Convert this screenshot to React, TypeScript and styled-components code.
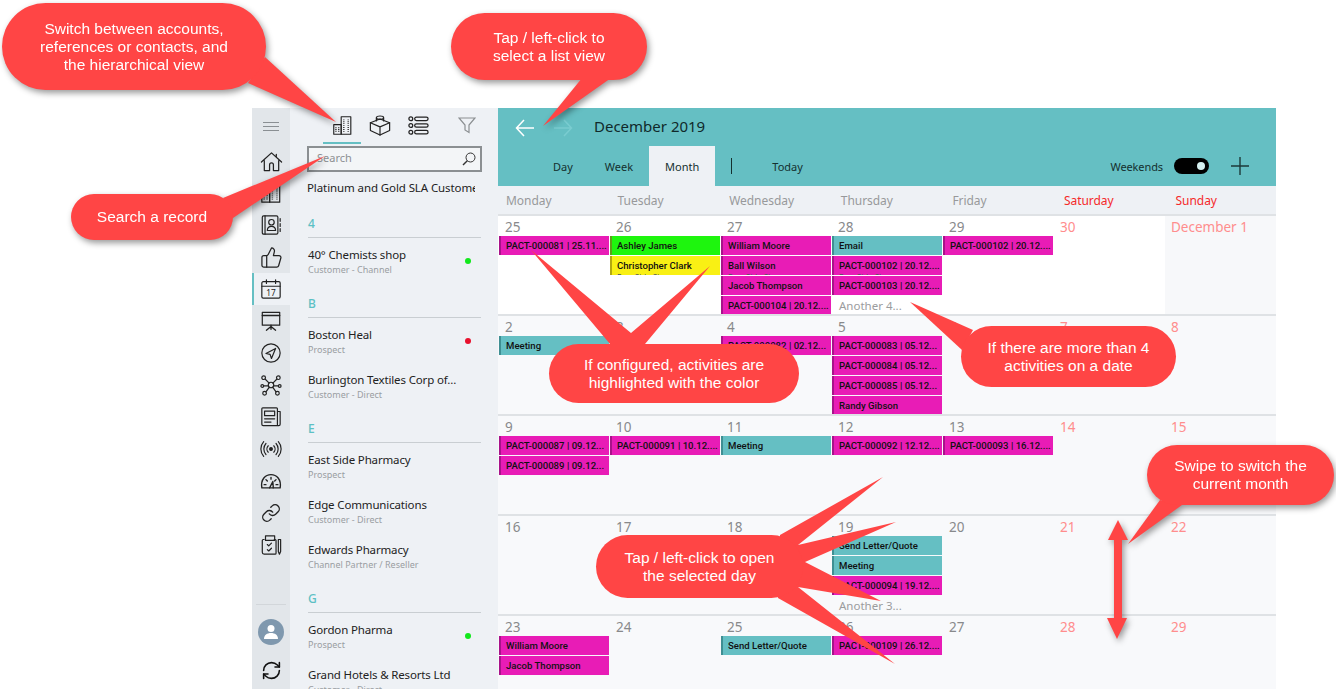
import React from "react";
import styled, { createGlobalStyle } from "styled-components";
import { Link, RefreshCw, ThumbsUp } from "lucide-react";

type Activity = { text: string; kind?: "pink" | "teal" | "green" | "yellow"; sub?: string; more?: boolean };
type Day = { label: string; weekend?: boolean; tint?: boolean; items?: Activity[] };

const pact = (text: string): Activity => ({ text, kind: "pink" });
const teal = (text: string): Activity => ({ text, kind: "teal" });

const weekdays = ["Monday", "Tuesday", "Wednesday", "Thursday", "Friday", "Saturday", "Sunday"];

const weeks: Day[][] = [
  [
    { label: "25", items: [pact("PACT-000081 | 25.11....")] },
    {
      label: "26",
      items: [
        { text: "Ashley James", kind: "green" },
        { text: "Christopher Clark", kind: "yellow", sub: "East Side Sh" },
      ],
    },
    {
      label: "27",
      items: [
        pact("William Moore"),
        { text: "Ball Wilson", kind: "pink", sub: "East Side Sh" },
        pact("Jacob Thompson"),
        pact("PACT-000104 | 20.12...."),
      ],
    },
    {
      label: "28",
      items: [
        teal("Email"),
        { text: "PACT-000102 | 20.12....", kind: "pink", sub: "East Side Sh" },
        pact("PACT-000103 | 20.12...."),
        { text: "Another 4...", more: true },
      ],
    },
    { label: "29", items: [pact("PACT-000102 | 20.12....")] },
    { label: "30", weekend: true },
    { label: "December 1", weekend: true, tint: true },
  ],
  [
    { label: "2", items: [teal("Meeting")] },
    { label: "3" },
    { label: "4", items: [pact("PACT-000082 | 02.12...")] },
    {
      label: "5",
      items: [
        pact("PACT-000083 | 05.12..."),
        pact("PACT-000084 | 05.12..."),
        pact("PACT-000085 | 05.12..."),
        pact("Randy Gibson"),
      ],
    },
    { label: "6" },
    { label: "7", weekend: true },
    { label: "8", weekend: true },
  ],
  [
    { label: "9", items: [pact("PACT-000087 | 09.12..."), pact("PACT-000089 | 09.12...")] },
    { label: "10", items: [pact("PACT-000091 | 10.12....")] },
    { label: "11", items: [teal("Meeting")] },
    { label: "12", items: [pact("PACT-000092 | 12.12....")] },
    { label: "13", items: [pact("PACT-000093 | 16.12....")] },
    { label: "14", weekend: true },
    { label: "15", weekend: true },
  ],
  [
    { label: "16" },
    { label: "17" },
    { label: "18" },
    {
      label: "19",
      items: [
        teal("Send Letter/Quote"),
        teal("Meeting"),
        pact("PACT-000094 | 19.12...."),
        { text: "Another 3...", more: true },
      ],
    },
    { label: "20" },
    { label: "21", weekend: true },
    { label: "22", weekend: true },
  ],
  [
    { label: "23", items: [pact("William Moore"), pact("Jacob Thompson")] },
    { label: "24" },
    { label: "25", items: [teal("Send Letter/Quote")] },
    { label: "26", items: [pact("PACT-000109 | 26.12....")] },
    { label: "27" },
    { label: "28", weekend: true },
    { label: "29", weekend: true },
  ],
];

const sections = [
  { head: "4", rows: [{ name: "40° Chemists shop", sub: "Customer - Channel", dot: "#12e81c" }] },
  {
    head: "B",
    rows: [
      { name: "Boston Heal", sub: "Prospect", dot: "#e8112d" },
      { name: "Burlington Textiles Corp of...", sub: "Customer - Direct" },
    ],
  },
  {
    head: "E",
    rows: [
      { name: "East Side Pharmacy", sub: "Prospect" },
      { name: "Edge Communications", sub: "Customer - Direct" },
      { name: "Edwards Pharmacy", sub: "Channel Partner / Reseller" },
    ],
  },
  {
    head: "G",
    rows: [
      { name: "Gordon Pharma", sub: "Prospect", dot: "#12e81c" },
      { name: "Grand Hotels & Resorts Ltd", sub: "Customer - Direct" },
    ],
  },
];

const Icon = ({ children, size = 22 }: { children: React.ReactNode; size?: number }) => (
  <svg width={size} height={size} viewBox="0 0 24 24" fill="none" stroke="#222" strokeWidth="1.3" strokeLinejoin="round" strokeLinecap="round">
    {children}
  </svg>
);

const BuildingIcon = ({ size = 22 }: { size?: number }) => (
  <Icon size={size}>
    <rect x="10.5" y="2" width="11" height="20" />
    <rect x="2" y="11" width="8.5" height="11" />
    <path d="M13.5 5v15M18.5 5v15" strokeDasharray="1 1.2" strokeLinecap="butt" strokeWidth="1.5" />
    <path d="M4.5 14v6M7.7 14v6" strokeDasharray="1 1" strokeLinecap="butt" strokeWidth="1.5" />
  </Icon>
);

const icons = {
  home: (
    <Icon size={23}>
      <path d="M1.5 12.5 12 3l10.500 9.500M17 4.500V7.500M4.500 11v10.500h5.500v-6a2 2 0 0 1 4 0v6h5.500V11" />
    </Icon>
  ),
  contacts: (
    <Icon>
      <rect x="2.500" y="2" width="17" height="20" rx="1.500" />
      <path d="M5.500 2v20M22 5v3M22 10.500v3M22 16v3" />
      <circle cx="12.500" cy="9" r="3" />
      <path d="M8 18c0-6 9-6 9 0z" />
    </Icon>
  ),
  calendar: (
    <Icon>
      <rect x="2" y="4" width="20" height="18" rx="1.500" />
      <path d="M2 9h20M7 2v4M17 2v4" />
      <text x="12" y="19.500" fontSize="9" textAnchor="middle" fill="#222" stroke="none" fontFamily="Noto Sans, sans-serif">17</text>
    </Icon>
  ),
  board: (
    <Icon>
      <rect x="2.500" y="2.500" width="19" height="14" />
      <path d="M2.500 6h19M12 16.500V21M12 18l-5 4M12 18l5 4" strokeWidth="1.500" />
    </Icon>
  ),
  send: (
    <Icon>
      <circle cx="12" cy="12" r="10" />
      <path d="M17 7 6.500 12.500l4.500 1 1.500 4.500z" />
    </Icon>
  ),
  network: (
    <Icon>
      <circle cx="12" cy="12" r="3" />
      <circle cx="4" cy="4" r="2" />
      <circle cx="20" cy="4" r="2" />
      <circle cx="2.500" cy="13" r="1.500" />
      <circle cx="21.500" cy="13" r="1.500" />
      <circle cx="5" cy="21" r="2" />
      <circle cx="19" cy="21" r="2" />
      <path d="M5.500 5.500 10 10M18.500 5.500 14 10M4 13h5M20 13h-5M6.500 19.500 10 14.500M17.500 19.500 14 14.500" />
    </Icon>
  ),
  news: (
    <Icon>
      <path d="M19 20.500V3a1 1 0 0 0-1-1H3a1 1 0 0 0-1 1v17a1.500 1.500 0 0 0 1.500 1.500H20.500A1.500 1.500 0 0 0 22 20V6h-3" />
      <rect x="5" y="5.500" width="11" height="5" />
      <path d="M5 14h11M5 17.500h7" />
    </Icon>
  ),
  signal: (
    <Icon>
      <circle cx="12" cy="12" r="1.500" fill="#222" />
      <path d="M9 8.500a5 5 0 0 0 0 7M15 8.500a5 5 0 0 1 0 7M6.500 6a9 9 0 0 0 0 12M17.500 6a9 9 0 0 1 0 12M4 4a12 12 0 0 0 0 16M20 4a12 12 0 0 1 0 16" />
    </Icon>
  ),
  gauge: (
    <Icon>
      <path d="M2 19.500C.5 10 6 5 12 5s11.500 5 10 14.500zM12 8v2M6.500 10.500 8 12M17.500 10.500 16 12M4.500 16h2M19.500 16h-2" strokeWidth="1.500" />
      <path d="M10.500 19.500 14 12.500l.5 7" strokeWidth="1.500" />
    </Icon>
  ),
  clip: (
    <Icon>
      <path d="M17 6H18a1 1 0 0 1 1 1v14a1 1 0 0 1-1 1H6a2 2 0 0 1-2-2V7a1 1 0 0 1 1-1h1" transform="translate(-1.500 0)" />
      <rect x="6" y="2" width="10" height="5" />
      <path d="M8 11.500l1.500 1.500 3-3M8 17l1.500 1.500 3-3" />
      <path d="M20 6h2.500v13L21.200 22 20 19z" />
    </Icon>
  ),
};

const callouts = [
  "265,57 336,122 248,83",
  "223,198 325,156 233,218",
  "582,78 543,126 611,78",
  "1160,500 1128,544 1182,505",
];

const flatTails = [
  "610,344 531,250 631,333 710,266 645,344",
  "973,330 910,302 962,350",
  "780,535 883,477 798,545 896,522 805,562 881,601 798,587 895,664 778,598",
];

export default function App() {
  return (
    <>
      <GlobalStyle />
      <Page>
        <Window>
          <Rail>
            <MenuButton>
              <Burger />
            </MenuButton>
            <RailItem>{icons.home}</RailItem>
            <RailItem><BuildingIcon /></RailItem>
            <RailItem>{icons.contacts}</RailItem>
            <RailItem><ThumbsUp size={23} strokeWidth={1.3} color="#222" /></RailItem>
            <RailItem $active>{icons.calendar}</RailItem>
            <RailItem>{icons.board}</RailItem>
            <RailItem>{icons.send}</RailItem>
            <RailItem>{icons.network}</RailItem>
            <RailItem>{icons.news}</RailItem>
            <RailItem>{icons.signal}</RailItem>
            <RailItem>{icons.gauge}</RailItem>
            <RailItem><Link size={20} strokeWidth={1.6} color="#222" /></RailItem>
            <RailItem>{icons.clip}</RailItem>
            <RailFooter>
              <AvatarSlot>
                <Avatar>
                  <svg width="16" height="16" viewBox="0 0 16 16" fill="#fff">
                    <circle cx="8" cy="4.500" r="3.500" />
                    <path d="M1 15c0-4 3-6 7-6s7 2 7 6z" />
                  </svg>
                </Avatar>
              </AvatarSlot>
              <RailItem><RefreshCw size={21} strokeWidth={1.8} color="#111" /></RailItem>
            </RailFooter>
          </Rail>

          <ListPanel>
            <ModeBar>
              <ModeTab $active><BuildingIcon size={21} /></ModeTab>
              <ModeTab>
                <Icon size={22}>
                  <path d="M12 5.500 22.500 9.500V18L12 23 1.500 18V9.500z" />
                  <path d="M1.500 9.500 12 14l10.500-4.500M12 14v9" />
                  <path d="M8 7.500V4a4 1.800 0 0 1 8 0v3.500M8 4a4 1.800 0 0 0 8 0" />
                </Icon>
              </ModeTab>
              <ModeTab>
                <Icon size={23}>
                  <circle cx="4" cy="5" r="2" />
                  <circle cx="4" cy="12" r="2" />
                  <circle cx="4" cy="19" r="2" />
                  <rect x="8" y="3.200" width="14" height="3.600" rx="1.800" />
                  <rect x="8" y="10.200" width="14" height="3.600" rx="1.800" />
                  <rect x="8" y="17.200" width="14" height="3.600" rx="1.800" />
                </Icon>
              </ModeTab>
              <FilterButton>
                <svg width="18" height="18" viewBox="0 0 18 18" fill="none" stroke="#8b8f92" strokeWidth="1.200">
                  <path d="M1 2h16l-6 7v7.500l-4-2.500V9z" />
                </svg>
              </FilterButton>
            </ModeBar>
            <SearchBox>
              <SearchText>Search</SearchText>
              <svg width="14" height="14" viewBox="0 0 14 14" fill="none" stroke="#333" strokeWidth="1">
                <circle cx="8.500" cy="5.500" r="4.500" />
                <path d="M5.300 8.700 1 13" strokeWidth="1.400" />
              </svg>
            </SearchBox>
            <ListTitle>Platinum and Gold SLA Customers</ListTitle>
            {sections.map((section) => (
              <section key={section.head}>
                <SectionHead>{section.head}</SectionHead>
                {section.rows.map((row) => (
                  <AccountRow key={row.name}>
                    <AccountText>
                      <AccountName>{row.name}</AccountName>
                      <AccountSub>{row.sub}</AccountSub>
                    </AccountText>
                    {row.dot && <StatusDot $color={row.dot} />}
                  </AccountRow>
                ))}
              </section>
            ))}
          </ListPanel>

          <Main>
            <Header>
              <TitleBar>
                <svg width="20" height="18" viewBox="0 0 20 18" fill="none" stroke="#fff" strokeWidth="1.500">
                  <path d="M19 9H1.500M9 1 1.500 9 9 17" />
                </svg>
                <ForwardArrow width="20" height="18" viewBox="0 0 20 18" fill="none" stroke="#7accd0" strokeWidth="1.500">
                  <path d="M1 9h17.500M11 1l7.500 8-7.500 8" />
                </ForwardArrow>
                <MonthTitle>December 2019</MonthTitle>
              </TitleBar>
              <ViewBar>
                <ViewTab>Day</ViewTab>
                <ViewTab>Week</ViewTab>
                <ViewTab $active>Month</ViewTab>
                <ViewDivider />
                <TodayLabel>Today</TodayLabel>
                <WeekendsLabel>Weekends</WeekendsLabel>
                <Toggle>
                  <ToggleKnob />
                </Toggle>
                <svg width="18" height="18" viewBox="0 0 18 18" stroke="#1d3a3a" strokeWidth="1.400">
                  <path d="M9 0v18M0 9h18" />
                </svg>
              </ViewBar>
            </Header>

            <WeekdayRow>
              {weekdays.map((day, i) => (
                <Weekday key={day} $weekend={i > 4}>{day}</Weekday>
              ))}
            </WeekdayRow>

            {weeks.map((week, w) => (
              <WeekRow key={w} $white={w === 0}>
                {week.map((day, d) => (
                  <DayCell key={d} $tint={day.tint}>
                    <DayNumber $weekend={day.weekend}>{day.label}</DayNumber>
                    {day.items?.map((item, n) =>
                      item.more ? (
                        <MoreLink key={n}>{item.text}</MoreLink>
                      ) : (
                        <ActivityChip key={n} $kind={item.kind || "pink"}>
                          <ChipTitle>{item.text}</ChipTitle>
                          {item.sub && <ChipSub>{item.sub}</ChipSub>}
                        </ActivityChip>
                      )
                    )}
                  </DayCell>
                ))}
              </WeekRow>
            ))}
          </Main>
        </Window>

        <ShadowLayer>
          <Tails viewBox="0 0 1336 689">
            {callouts.map((points) => (
              <polygon key={points} points={points} fill="#ff4545" />
            ))}
            <polygon points="1118,520 1128,540 1122,540 1122,618 1127,618 1117,639 1107,618 1114,618 1114,540 1108,540" fill="#ff4545" />
          </Tails>
          <SwitchCallout>Switch between accounts,<br />references or contacts, and<br />the hierarchical view</SwitchCallout>
          <SearchCallout>Search a record</SearchCallout>
          <ListCallout>Tap / left-click to<br />select a list view</ListCallout>
          <SwipeCallout>Swipe to switch the<br />current month</SwipeCallout>
        </ShadowLayer>
        <FlatLayer>
          <Tails viewBox="0 0 1336 689">
            {flatTails.map((points) => (
              <polygon key={points} points={points} fill="#ff4545" />
            ))}
          </Tails>
          <ColorCallout>If configured, activities are<br />highlighted with the color</ColorCallout>
          <MoreCallout>If there are more than 4<br />activities on a date</MoreCallout>
          <OpenCallout>Tap / left-click to open<br />the selected day</OpenCallout>
        </FlatLayer>
      </Page>
    </>
  );
}

const GlobalStyle = createGlobalStyle`
  html, body {
    margin: 0;
    background: #fff;
    font-family: "Noto Sans", "Open Sans", sans-serif;
  }
`;

const Page = styled.div`
  position: relative;
  width: 1336px;
  height: 689px;
  padding: 108px 60px 0 252px;
  box-sizing: border-box;
  overflow: hidden;
`;

const Window = styled.div`
  display: flex;
  width: 1024px;
  height: 581px;
  overflow: hidden;
`;

const Rail = styled.nav`
  display: flex;
  flex-direction: column;
  flex: 0 0 38px;
  background: #e2e6ea;
`;

const MenuButton = styled.div`
  display: flex;
  align-items: center;
  justify-content: center;
  height: 37px;
`;

const Burger = styled.div`
  width: 16px;
  height: 7px;
  border-top: 1px solid #8a8f93;
  border-bottom: 1px solid #8a8f93;
  position: relative;
  &::after {
    content: "";
    position: absolute;
    left: 0;
    right: 0;
    top: 3px;
    border-top: 1px solid #8a8f93;
  }
`;

const RailItem = styled.div<{ $active?: boolean }>`
  display: flex;
  align-items: center;
  justify-content: center;
  flex: 0 0 32px;
  box-sizing: border-box;
  background: ${(p) => (p.$active ? "#eef1f5" : "transparent")};
  border-left: 2px solid ${(p) => (p.$active ? "#65bfc3" : "transparent")};
  padding-right: 2px;
`;

const RailFooter = styled.div`
  margin-top: auto;
  margin-inline: 4px;
  padding-bottom: 3px;
  border-top: 1px solid #d2d6da;
  display: flex;
  flex-direction: column;
`;

const AvatarSlot = styled.div`
  display: flex;
  justify-content: center;
  padding: 14px 0 9px;
`;

const Avatar = styled.div`
  display: flex;
  align-items: center;
  justify-content: center;
  width: 26px;
  height: 26px;
  border-radius: 50%;
  background: #7f98ae;
`;

const ListPanel = styled.aside`
  flex: 0 0 208px;
  background: #eef1f5;
  overflow: hidden;
`;

const ModeBar = styled.div`
  display: flex;
  height: 36px;
  padding-left: 33px;
  padding-right: 16px;
`;

const ModeTab = styled.div<{ $active?: boolean }>`
  display: flex;
  align-items: center;
  justify-content: center;
  width: 38px;
  box-sizing: border-box;
  border-bottom: 2px solid ${(p) => (p.$active ? "#65bfc3" : "transparent")};
`;

const FilterButton = styled.div`
  display: flex;
  align-items: center;
  justify-content: center;
  width: 30px;
  height: 34px;
  margin-left: auto;
`;

const SearchBox = styled.div`
  display: flex;
  align-items: center;
  justify-content: space-between;
  box-sizing: border-box;
  width: 175px;
  height: 26px;
  margin: 2px 0 0 17px;
  padding: 0 4px 0 8px;
  border: 2px solid #8b8f92;
  background: #f3f5f7;
`;

const SearchText = styled.span`
  font-size: 11px;
  line-height: 18px;
  margin-top: -2px;
  color: #8d9093;
`;

const ListTitle = styled.div`
  width: 168px;
  margin-left: 17px;
  font-size: 11.500px;
  letter-spacing: -0.1px;
  line-height: 32px;
  height: 31px;
  color: #222;
  white-space: nowrap;
  overflow: hidden;
`;

const SectionHead = styled.div`
  box-sizing: border-box;
  height: 35px;
  margin: 0 17px 0 18px;
  padding-top: 12px;
  border-bottom: 1px solid #c9ced2;
  font-size: 12px;
  font-weight: 500;
  line-height: 17px;
  color: #5cc0c4;
`;

const AccountRow = styled.div`
  display: flex;
  align-items: center;
  height: 45px;
  margin: 0 27px 0 18px;
`;

const AccountText = styled.div`
  flex: 1;
  min-width: 0;
  padding-top: 2px;
`;

const AccountName = styled.div`
  font-size: 11.500px;
  letter-spacing: -0.15px;
  line-height: 16px;
  color: #222;
  white-space: nowrap;
`;

const AccountSub = styled.div`
  font-size: 9px;
  line-height: 13px;
  color: #9a9ea2;
  white-space: nowrap;
`;

const StatusDot = styled.span<{ $color: string }>`
  width: 6px;
  height: 6px;
  border-radius: 50%;
  background: ${(p) => p.$color};
`;

const Main = styled.main`
  flex: 1;
  min-width: 0;
  background: #f8f9fb;
  overflow: hidden;
`;

const Header = styled.header`
  height: 78px;
  background: #65bfc3;
  color: #14302f;
`;

const TitleBar = styled.div`
  display: flex;
  align-items: center;
  height: 36px;
  padding-left: 17px;
  padding-top: 2px;
  box-sizing: content-box;
`;

const ForwardArrow = styled.svg`
  margin-left: 18px;
`;

const MonthTitle = styled.h1`
  margin: -5px 0 0 21px;
  font-size: 15px;
  font-weight: 400;
  color: #10292a;
`;

const ViewBar = styled.div`
  display: flex;
  align-items: center;
  height: 40px;
  padding-left: 39px;
  padding-right: 27px;
`;

const ViewTab = styled.div<{ $active?: boolean }>`
  display: flex;
  align-items: center;
  align-self: stretch;
  padding: 0 16px;
  font-size: 11px;
  color: #14302f;
  background: ${(p) => (p.$active ? "#eef1f5" : "transparent")};
`;

const ViewDivider = styled.div`
  width: 1px;
  height: 16px;
  margin-left: 16px;
  background: #14302f;
`;

const TodayLabel = styled.div`
  margin-left: 40px;
  font-size: 11px;
`;

const WeekendsLabel = styled.div`
  margin-left: auto;
  font-size: 11px;
  letter-spacing: -0.1px;
`;

const Toggle = styled.div`
  display: flex;
  align-items: center;
  justify-content: flex-end;
  box-sizing: border-box;
  width: 35px;
  height: 16px;
  margin: 0 22px 0 11px;
  padding-right: 4px;
  border-radius: 8px;
  background: #000;
`;

const ToggleKnob = styled.span`
  width: 8px;
  height: 8px;
  border-radius: 50%;
  background: #d5f0f0;
`;

const WeekdayRow = styled.div`
  display: grid;
  grid-template-columns: repeat(7, 111.6px);
  box-sizing: border-box;
  height: 30px;
  padding-left: 1px;
  background: #eef1f5;
  border-bottom: 2px solid #dfe2e5;
`;

const Weekday = styled.div<{ $weekend?: boolean }>`
  padding-left: 7px;
  font-size: 12px;
  letter-spacing: -0.05px;
  line-height: 30px;
  color: ${(p) => (p.$weekend ? "#f52a2a" : "#98999b")};
`;

const WeekRow = styled.div<{ $white?: boolean }>`
  display: grid;
  grid-template-columns: repeat(7, 111px);
  box-sizing: border-box;
  height: 100px;
  padding-left: 1px;
  border-bottom: 2px solid #dfe2e5;
  background: ${(p) => (p.$white ? "#fff" : "transparent")};
`;

const DayCell = styled.div<{ $tint?: boolean }>`
  overflow: hidden;
  min-width: 0;
  background: ${(p) => (p.$tint ? "#f7f8fa" : "transparent")};
`;

const DayNumber = styled.div<{ $weekend?: boolean }>`
  height: 20px;
  padding-left: 6px;
  font-size: 13.500px;
  line-height: 22px;
  color: ${(p) => (p.$weekend ? "#ff8d8d" : "#88898b")};
`;

const chipColors = {
  pink: { bg: "#e81cb6", edge: "#a8128a" },
  teal: { bg: "#65bfc3", edge: "#3f8f93" },
  green: { bg: "#1ef50e", edge: "#5f9c18" },
  yellow: { bg: "#f9f014", edge: "#b3a90f" },
};

const ActivityChip = styled.div<{ $kind: keyof typeof chipColors }>`
  box-sizing: border-box;
  width: 110px;
  height: 19px;
  margin-bottom: 1px;
  padding-left: 5px;
  overflow: hidden;
  background: ${(p) => chipColors[p.$kind].bg};
  border-left: 2px solid ${(p) => chipColors[p.$kind].edge};
`;

const ChipTitle = styled.div`
  font-family: Roboto, "Noto Sans", sans-serif;
  font-size: 9.600px;
  font-weight: 500;
  line-height: 19px;
  height: 17px;
  color: #111;
  white-space: nowrap;
`;

const ChipSub = styled.div`
  font-size: 8px;
  line-height: 10px;
  color: #555;
`;

const MoreLink = styled.div`
  padding-left: 7px;
  font-size: 11.500px;
  line-height: 19px;
  color: #9b9c9e;
`;

const ShadowLayer = styled.div`
  position: absolute;
  inset: 0;
  pointer-events: none;
  filter: drop-shadow(2px 3px 3px rgba(0, 0, 0, 0.4));
`;

const FlatLayer = styled.div`
  position: absolute;
  inset: 0;
  pointer-events: none;
`;

const Tails = styled.svg`
  position: absolute;
  left: 0;
  top: 0;
  width: 1336px;
  height: 689px;
`;

const Callout = styled.div`
  position: absolute;
  display: flex;
  align-items: center;
  justify-content: center;
  box-sizing: border-box;
  background: #ff4545;
  color: #fff;
  font-family: "Liberation Sans", Arial, sans-serif;
  font-size: 15.500px;
  line-height: 18px;
  text-align: center;
`;

const SwitchCallout = styled(Callout)`
  left: 2px;
  top: 3px;
  width: 264px;
  height: 87px;
  border-radius: 44px;
`;

const SearchCallout = styled(Callout)`
  left: 71px;
  top: 194px;
  width: 162px;
  height: 46px;
  border-radius: 23px;
`;

const ListCallout = styled(Callout)`
  left: 451px;
  top: 13px;
  width: 196px;
  height: 67px;
  border-radius: 34px;
`;

const SwipeCallout = styled(Callout)`
  left: 1147px;
  top: 445px;
  width: 187px;
  height: 60px;
  border-radius: 30px;
`;

const ColorCallout = styled(Callout)`
  left: 549px;
  top: 344px;
  width: 250px;
  height: 59px;
  border-radius: 30px;
`;

const MoreCallout = styled(Callout)`
  left: 961px;
  top: 326px;
  width: 215px;
  height: 61px;
  border-radius: 31px;
`;

const OpenCallout = styled(Callout)`
  left: 596px;
  top: 535px;
  width: 207px;
  height: 63px;
  border-radius: 32px;
`;
